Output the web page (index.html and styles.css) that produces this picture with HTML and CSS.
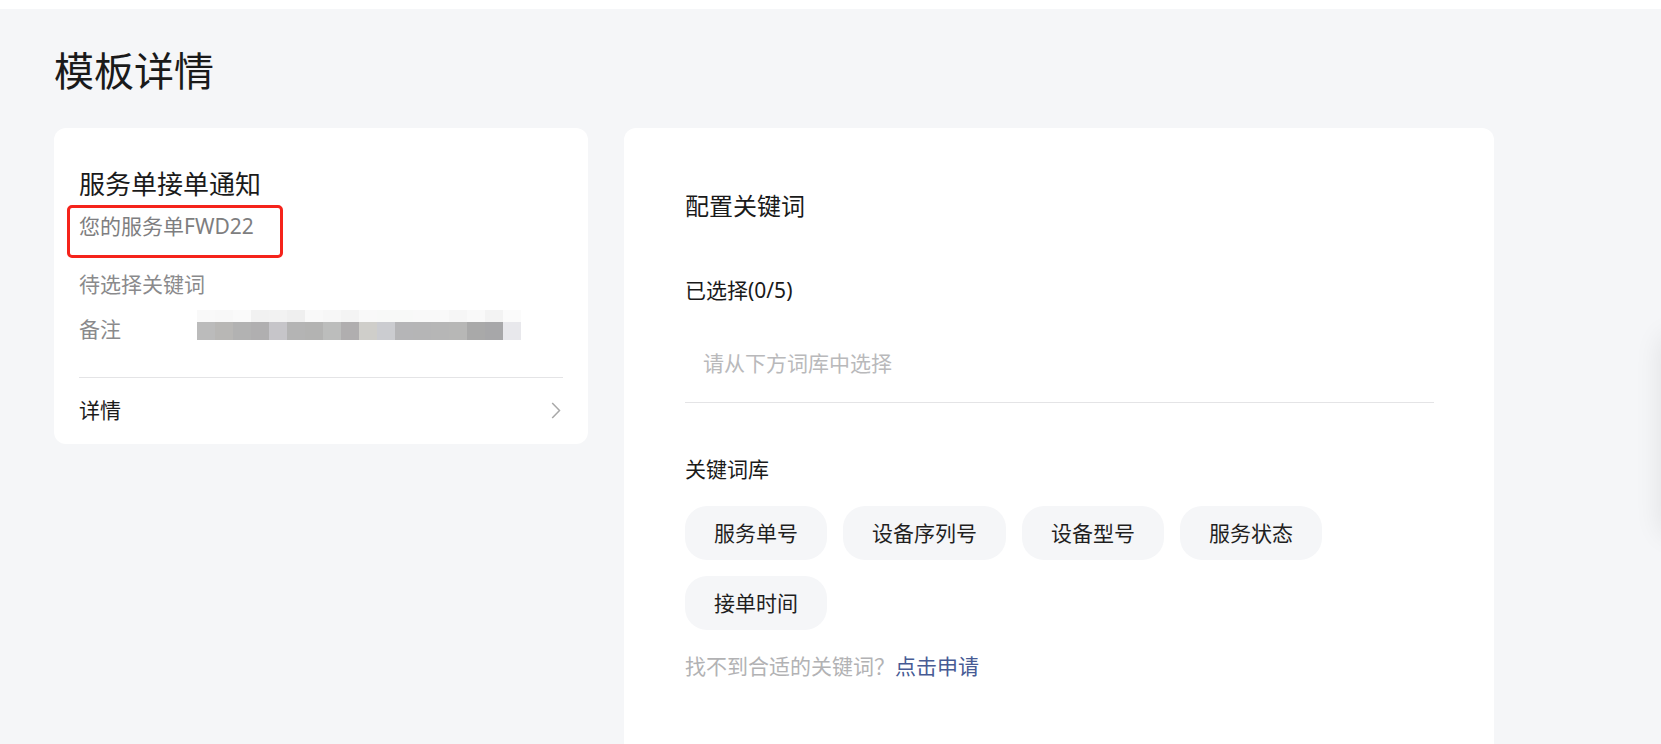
FILE: index.html
```html
<!DOCTYPE html>
<html lang="zh-CN">
<head>
<meta charset="utf-8">
<title>模板详情</title>
<link rel="stylesheet" href="styles.css">
</head>
<body>
<div class="topbar"></div>
<main class="page">
  <h1 class="page-title">模板详情</h1>
  <div class="layout">
    <section class="card preview">
      <h2 class="preview-title">服务单接单通知</h2>
      <div class="preview-sub">
        您的服务单FWD22
        <span class="annot"></span>
      </div>
      <div class="preview-pending">待选择关键词</div>
      <div class="preview-row">
        <span class="row-label">备注</span>
        <div class="mosaic">
          <div class="mosaic-light"></div>
          <div class="mosaic-dark"></div>
        </div>
      </div>
      <div class="preview-link">
        <span>详情</span>
        <svg class="chev" width="10" height="17" viewBox="0 0 10 17"><polyline points="1.2,1 8.5,8.5 1.2,16" fill="none" stroke="#a8a8a8" stroke-width="1.5"/></svg>
      </div>
    </section>

    <section class="card config">
      <h2 class="config-title">配置关键词</h2>
      <div class="section-label selected-label">已选择(0/5)</div>
      <div class="selected-box">
        <span class="placeholder">请从下方词库中选择</span>
      </div>
      <div class="section-label lib-label">关键词库</div>
      <div class="chips">
        <span class="chip">服务单号</span>
        <span class="chip">设备序列号</span>
        <span class="chip">设备型号</span>
        <span class="chip">服务状态</span>
        <span class="chip">接单时间</span>
      </div>
      <p class="apply">找不到合适的关键词？<a class="apply-link">点击申请</a></p>
    </section>
  </div>
</main>
<div class="side-float"></div>
</body>
</html>
```

FILE: styles.css
```css
html, body {
  margin: 0;
  padding: 0;
  overflow: hidden;
  height: 100%;
}
body {
  background: #ffffff;
  font-family: "Noto Sans", "Noto Sans CJK SC", sans-serif;
  color: #1d1d1f;
}
.topbar {
  height: 9px;
  background: #ffffff;
}
.page {
  background: #f5f6f8;
  padding: 34px 54px 0;
  min-height: 800px;
}
.page-title {
  margin: 0 0 29px;
  font-size: 40px;
  line-height: 56px;
  font-weight: 400;
  color: #1a1a1a;
}
.layout {
  display: flex;
  align-items: flex-start;
  gap: 36px;
}
.card {
  background: #ffffff;
  border-radius: 12px;
  box-sizing: border-box;
}
.preview {
  width: 534px;
  padding: 38px 25px 19px;
}
.preview-title {
  margin: 0;
  font-size: 26px;
  line-height: 36px;
  font-weight: 400;
  color: #1a1a1a;
}
.preview-sub {
  position: relative;
  margin-top: 10px;
  font-size: 21px;
  line-height: 28px;
  color: #7e7e80;
}
.annot {
  position: absolute;
  left: -12px;
  top: -7px;
  width: 216px;
  height: 53px;
  box-sizing: border-box;
  border: 3px solid #f5231b;
  border-radius: 5px;
}
.preview-pending {
  margin-top: 30px;
  font-size: 21px;
  line-height: 28px;
  color: #8a8a8c;
}
.preview-row {
  display: flex;
  align-items: center;
  margin-top: 17px;
  height: 28px;
}
.row-label {
  width: 118px;
  font-size: 21px;
  line-height: 28px;
  color: #8a8a8c;
}
.mosaic {
  display: flex;
  flex-direction: column;
  width: 324px;
  margin-top: -8px;
}
.mosaic-light {
  height: 12px;
  background: linear-gradient(to right,
    #f9f9f9 0 18px, #f8f8f8 18px 36px, #fafafa 36px 54px, #f1f1f1 54px 72px,
    #f2f2f2 72px 90px, #efefef 90px 108px, #f9f9f9 108px 126px, #f7f7f7 126px 144px,
    #f4f4f4 144px 162px, #f9f9f9 162px 180px, #f8f9f8 180px 198px, #f8f9f8 198px 216px,
    #f9f9f9 216px 234px, #f9f9f9 234px 252px, #f6f6f6 252px 270px, #f9f9f9 270px 288px,
    #f3f3f3 288px 306px, #fbfbfb 306px 324px);
}
.mosaic-dark {
  height: 18px;
  background: linear-gradient(to right,
    #bbbbbb 0 18px, #b8b7b5 18px 36px, #b2b2b2 36px 54px, #b0afb0 54px 72px,
    #c6c5c9 72px 90px, #b4b4b4 90px 108px, #b3b3b2 108px 126px, #bcbdbc 126px 144px,
    #b0aeaf 144px 162px, #cfceca 162px 180px, #cbccd0 180px 198px, #b5b5b7 198px 216px,
    #b5b5b6 216px 234px, #b6b6b6 234px 252px, #b7b7b6 252px 270px, #a9a9a9 270px 288px,
    #a7a7a9 288px 306px, #e8e8ec 306px 324px);
}
.preview-link {
  margin-top: 34px;
  border-top: 1px solid #e4e4e6;
  padding-top: 17px;
  display: flex;
  align-items: center;
  justify-content: space-between;
  font-size: 21px;
  line-height: 30px;
  color: #1a1a1a;
}
.chev {
  margin-right: 2px;
}

.config {
  width: 870px;
  padding: 61px 60px 120px 61px;
}
.config-title {
  margin: 0;
  font-size: 24px;
  line-height: 34px;
  font-weight: 400;
  color: #1a1a1a;
}
.section-label {
  font-size: 21px;
  line-height: 28px;
  color: #1a1a1a;
}
.selected-label {
  margin-top: 53px;
}
.selected-box {
  margin-top: 45px;
  padding: 0 0 25px 18px;
  border-bottom: 1px solid #e4e4e6;
}
.placeholder {
  font-size: 21px;
  line-height: 28px;
  color: #b9b9bb;
}
.lib-label {
  margin-top: 52px;
}
.chips {
  margin-top: 23px;
  display: flex;
  flex-wrap: wrap;
  gap: 16px 16px;
  width: 660px;
}
.chip {
  display: inline-block;
  height: 54px;
  line-height: 54px;
  padding: 0 29px;
  border-radius: 22px;
  background: #f5f6f8;
  font-size: 21px;
  color: #1f1f1f;
}
.apply {
  margin: 22px 0 0;
  font-size: 21px;
  line-height: 28px;
  color: #b2b2b4;
}
.apply-link {
  color: #475b94;
  text-decoration: none;
}
.side-float {
  position: fixed;
  top: 335px;
  right: -60px;
  width: 60px;
  height: 200px;
  background: #ffffff;
  border-radius: 12px;
  box-shadow: 0 0 28px rgba(0, 0, 0, 0.09);
}
```
